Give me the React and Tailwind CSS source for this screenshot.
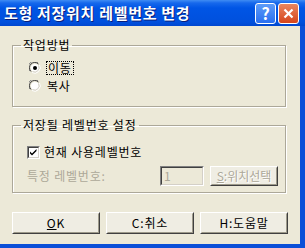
import { useState } from "react";

const font = { fontFamily: '"Noto Sans CJK KR", "Noto Sans", sans-serif' };

function Radio({ checked }) {
  return (
    <svg width="12" height="12" viewBox="0 0 12 12" className="shrink-0">
      <path d="M1 9 A5.5 5.5 0 0 1 9 1" stroke="#808080" fill="none" />
      <path d="M2 9.5 A4.5 4.5 0 0 1 9.5 2" stroke="#404040" fill="none" />
      <circle cx="6" cy="6" r="4" fill="#fff" />
      <path d="M10.5 3 A5.5 5.5 0 0 1 3 10.5" stroke="#fff" fill="none" />
      <path d="M9.6 3.6 A4.5 4.5 0 0 1 3.6 9.6" stroke="#d4d0c8" fill="none" />
      {checked && <circle cx="6" cy="6" r="2" fill="#000" />}
    </svg>
  );
}

function Checkbox({ checked }) {
  return (
    <div className="w-[13px] h-[13px] shrink-0 border border-t-[#808080] border-l-[#808080] border-r-white border-b-white">
      <div className="w-full h-full bg-white border border-t-[#404040] border-l-[#404040] border-r-[#d4d0c8] border-b-[#d4d0c8]">
        {checked && (
          <svg width="9" height="9" viewBox="0 0 9 9">
            <path d="M1 3.5 L3 5.5 L7.5 1 L7.5 3 L3 7.5 L1 5.5 Z" fill="#000" />
          </svg>
        )}
      </div>
    </div>
  );
}

function Button({ children, disabled, className = "", tight }) {
  return (
    <div
      className={`h-[22px] border border-t-white border-l-white border-r-[#404040] border-b-[#404040] ${className}`}
    >
      <div className="w-full h-full flex items-center justify-center bg-[#EFEDE3] border border-t-[#EFEDE3] border-l-[#EFEDE3] border-r-[#9d9a8a] border-b-[#9d9a8a]">
        <span
          className={`text-[12px] leading-[14px] ${tight ? "tracking-[0px]" : "tracking-[0.8px]"} ${disabled ? "text-[#aca899] [text-shadow:1px_1px_0_#fff]" : "text-black"}`}
        >
          {children}
        </span>
      </div>
    </div>
  );
}

export default function App() {
  const [mode] = useState("move");

  return (
    <div className="w-[305px] h-[248px] flex flex-col bg-[#0a4fd8]" style={font}>
      {/* title bar */}
      <div className="h-[26px] flex items-center pl-[4px] pr-[6px] bg-[linear-gradient(#3f8cf3_0px,#1668ec_3px,#0055e5_8px,#0050dd_22px,#0047cf_26px)]">
        <span className="flex-1 text-white font-bold text-[15px] leading-[18px] tracking-[0.7px] [text-shadow:1px_1px_0_#0a1e78]">
          도형 저장위치 레벨번호 변경
        </span>
        <div className="w-[21px] h-[21px] rounded-[3px] border border-white bg-[linear-gradient(#5d9cf8,#2a6ff0)] flex items-center justify-center text-white font-bold text-[16px] leading-none">
          ?
        </div>
        <div className="ml-[2px] w-[21px] h-[21px] rounded-[3px] border border-white bg-[linear-gradient(#e9865e,#d6451b)] flex items-center justify-center">
          <svg width="11" height="11" viewBox="0 0 11 11">
            <path d="M1.5 1.5 L9.5 9.5 M9.5 1.5 L1.5 9.5" stroke="#fff" strokeWidth="2.2" />
          </svg>
        </div>
      </div>

      {/* body */}
      <div className="flex-1 flex flex-col bg-[#ECE9D8] mr-[5px] mb-[4px] pt-[12px] px-[12px] text-[12px] leading-[14px] tracking-[0.8px]">
        <fieldset className="w-[274px] border border-[#aca899] shadow-[inset_1px_1px_0_#fff,1px_1px_0_#fff] pb-[11px]">
          <legend className="ml-[8px] px-[2px] text-black">작업방법</legend>
          <div className="mt-[7px] pl-[16px] flex flex-col">
            <div className="h-[18px] flex items-center">
              <Radio checked={mode === "move"} />
              <span className="ml-[5px] px-[1px] border border-dotted border-black leading-[12px] text-black">
                이동
              </span>
            </div>
            <div className="h-[18px] flex items-center">
              <Radio checked={mode === "copy"} />
              <span className="ml-[6px] text-black">복사</span>
            </div>
          </div>
        </fieldset>

        <fieldset className="mt-[11px] w-[274px] border border-[#aca899] shadow-[inset_1px_1px_0_#fff,1px_1px_0_#fff] pb-[6px]">
          <legend className="ml-[8px] px-[2px] text-black">저장될 레벨번호 설정</legend>
          <div className="mt-[13px] pl-[14px] h-[14px] flex items-center">
            <Checkbox checked />
            <span className="ml-[4px] text-black">현재 사용레벨번호</span>
          </div>
          <div className="mt-[7px] pl-[14px] h-[20px] flex items-center">
            <span className="w-[133px] text-[#aca899]">특정 레벨번호:</span>
            <div className="w-[44px] h-[20px] border border-t-[#808080] border-l-[#808080] border-r-white border-b-white">
              <div className="w-full h-full border border-t-[#404040] border-l-[#404040] border-r-[#d4d0c8] border-b-[#d4d0c8] pl-[2px] leading-[16px] text-[#aca899]">
                1
              </div>
            </div>
            <Button disabled tight className="ml-[6px] w-[68px] !h-[20px]">
              <span className="underline">S</span>:위치선택
            </Button>
          </div>
        </fieldset>

        <div className="mt-[19px] flex gap-[6px]">
          <Button className="w-[88px]">
            <span className="underline">O</span>K
          </Button>
          <Button className="w-[88px]">C:취소</Button>
          <Button className="w-[88px]">H:도움말</Button>
        </div>
      </div>
    </div>
  );
}
